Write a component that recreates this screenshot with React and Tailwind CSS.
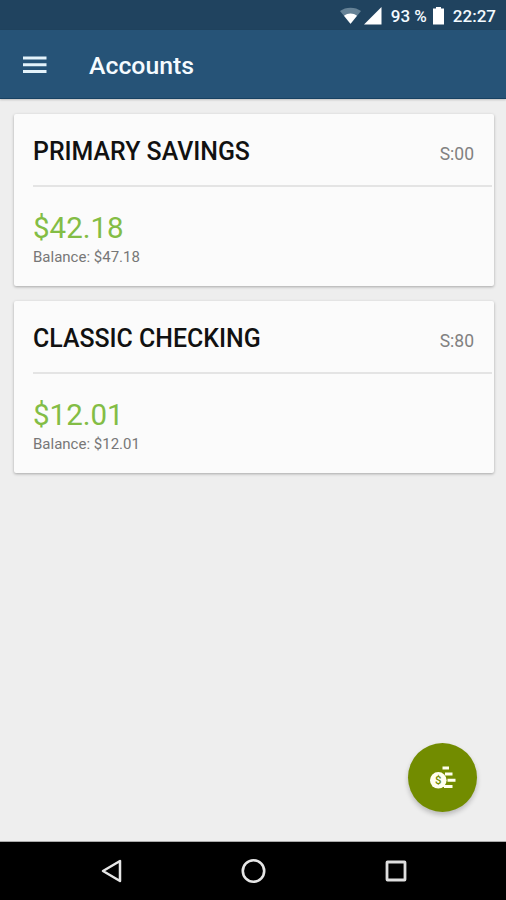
import React from 'react';

const accounts = [
  { name: 'PRIMARY SAVINGS', suffix: 'S:00', available: '$42.18', balance: '$47.18' },
  { name: 'CLASSIC CHECKING', suffix: 'S:80', available: '$12.01', balance: '$12.01' },
];

function StatusBar() {
  return (
    <div className="h-[30px] shrink-0 bg-[#20435f] flex items-center justify-end pr-[10px] pt-px text-[#f4fbff] text-[17px] font-medium">
      <svg className="w-[22px] h-[18px] mr-px" viewBox="0 0 22 18">
        <path d="M0 4C5.5-0.5 15.5-0.5 21 4L10.5 17Z" fill="#668296" />
        <path d="M4 8.8C8 5.8 13 5.8 17 8.8L10.5 16.7Z" fill="#fff" />
      </svg>
      <svg className="w-[18px] h-[18px] ml-px mr-px" viewBox="0 0 18 18">
        <path d="M17.5 0V17.5H0Z" fill="#fff" />
      </svg>
      <span className="ml-[8px] pt-[2px]">93 %</span>
      <svg className="w-[11px] h-[18px] ml-[6px]" viewBox="0 0 11 18">
        <path d="M3 0H8V1.5H11V17.5H0V1.5H3Z" fill="#fff" />
      </svg>
      <span className="ml-[9px] pt-[2px]">22:27</span>
    </div>
  );
}

function AppBar() {
  return (
    <header className="h-[69px] shrink-0 bg-[#265377] border-b border-[#174162] flex items-center pl-[23px] shadow-[0_1px_2px_rgba(0,0,0,0.2)]">
      <svg className="w-6 h-[18px] mt-[2px]" viewBox="0 0 24 18">
        <path d="M0 2H23.5M0 8.7H23.5M0 15.4H23.5" stroke="#e4f3fb" strokeWidth="3" />
      </svg>
      <h1 className="ml-[42px] pt-[3px] text-[24.8px] leading-8 font-medium text-[#f5fbff]">Accounts</h1>
    </header>
  );
}

function AccountCard({ account }) {
  return (
    <div className="h-[172px] bg-[#fbfbfb] rounded-[2px] pl-[19px] shadow-[0_1px_3px_rgba(0,0,0,0.3)]">
      <div className="h-[73px] mr-[2px] pr-[18px] border-b-2 border-[#e4e4e4] flex items-center justify-between">
        <h2 className="pt-[4px] text-[24.9px] leading-8 font-medium text-[#111]">{account.name}</h2>
        <span className="pt-[9px] text-[17.5px] text-[#818181]">{account.suffix}</span>
      </div>
      <div className="pt-[22px]">
        <div className="text-[29.5px] leading-[38px] text-[#83bd45]">{account.available}</div>
        <div className="text-[15px] leading-5 text-[#777]">Balance: {account.balance}</div>
      </div>
    </div>
  );
}

function TransferButton() {
  return (
    <button className="absolute left-[408px] top-[743px] w-[69px] h-[69px] rounded-full bg-[#728c00] shadow-[0_3px_5px_rgba(0,0,0,0.22)]">
      <svg className="w-[69px] h-[69px]" viewBox="0 0 69 69">
        <path d="M34.5 25H41M37 31H44.5M39.5 37.3H47.5M36 43.5H44.5" stroke="#fffff0" strokeWidth="3" />
        <circle cx="30.3" cy="37.3" r="8.3" fill="#fffff0" />
        <text x="30.3" y="41.3" textAnchor="middle" fontSize="11.5" fontWeight="500" fill="#728c00">$</text>
      </svg>
    </button>
  );
}

function NavBar() {
  return (
    <nav className="h-[58px] shrink-0 bg-black flex items-center justify-between pl-[101px] pr-[99px]">
      <svg className="w-[21px] h-6" viewBox="0 0 21 24">
        <path d="M19 2V22L2 12Z" fill="none" stroke="#e6e6e6" strokeWidth="2.5" strokeLinejoin="round" />
      </svg>
      <svg className="w-6 h-6 overflow-visible" viewBox="0 0 24 24">
        <circle cx="11.5" cy="12" r="10.7" fill="none" stroke="#e6e6e6" strokeWidth="2.6" />
      </svg>
      <svg className="w-[22px] h-[22px]" viewBox="0 0 22 22">
        <rect x="2" y="2" width="18" height="18" rx="0.5" fill="none" stroke="#dedede" strokeWidth="2.8" />
      </svg>
    </nav>
  );
}

export default function App() {
  return (
    <div className="relative w-[506px] h-[900px] overflow-hidden flex flex-col bg-[#eeeeee] font-[Roboto,sans-serif]">
      <StatusBar />
      <AppBar />
      <main className="flex-1 pl-[14px] pr-[12px] pt-[15px] flex flex-col gap-[15px] border-b border-[#aaa]">
        {accounts.map((account) => (
          <AccountCard key={account.name} account={account} />
        ))}
      </main>
      <NavBar />
      <TransferButton />
    </div>
  );
}
